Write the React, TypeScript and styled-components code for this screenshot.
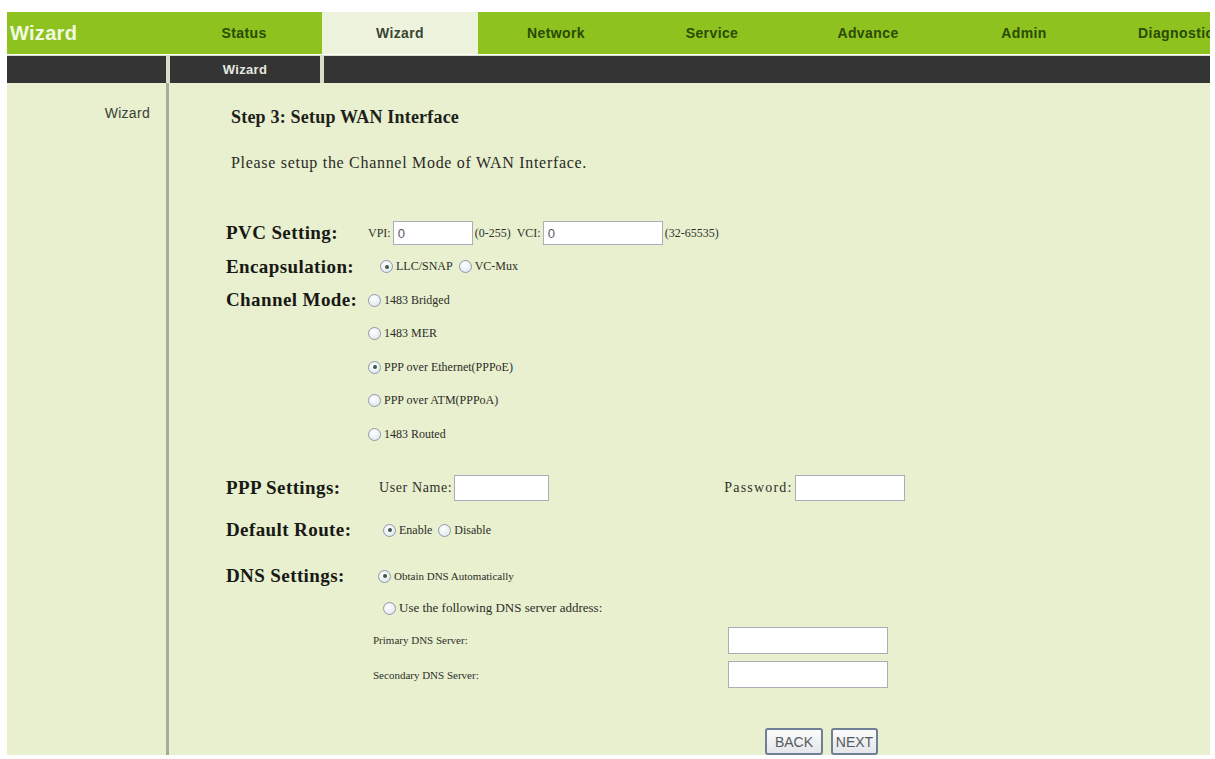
import React from 'react';
import styled, { createGlobalStyle } from 'styled-components';

const GlobalStyle = createGlobalStyle`
  html, body {
    margin: 0;
    padding: 0;
    background: #ffffff;
  }
  body {
    font-family: "Liberation Serif", "Times New Roman", serif;
    overflow: hidden;
  }
`;

const navTabs = ['Status', 'Wizard', 'Network', 'Service', 'Advance', 'Admin', 'Diagnostics'];

const channelModes = [
  { label: '1483 Bridged', checked: false },
  { label: '1483 MER', checked: false },
  { label: 'PPP over Ethernet(PPPoE)', checked: true },
  { label: 'PPP over ATM(PPPoA)', checked: false },
  { label: '1483 Routed', checked: false },
];

const App: React.FC = () => {
  return (
    <>
      <GlobalStyle />
      <Page>
        <TopNav>
          <Logo>Wizard</Logo>
          {navTabs.map((tab) => (
            <NavTab key={tab} $active={tab === 'Wizard'}>
              {tab}
            </NavTab>
          ))}
        </TopNav>
        <SubNav>
          <SubBlank $width={159} />
          <SubTab>Wizard</SubTab>
          <SubBlank $grow />
        </SubNav>
        <Body>
          <Sidebar>
            <SideItem>Wizard</SideItem>
          </Sidebar>
          <Main>
            <Title>Step 3: Setup WAN Interface</Title>
            <Description>Please setup the Channel Mode of WAN Interface.</Description>

            <Row $h={35} $mt={44}>
              <Label>PVC Setting:</Label>
              <Value>
                <Small>VPI:</Small>
                <TextBox $w={80} $h={24} defaultValue="0" />
                <Small>(0-255)</Small>
                <Small $ml={4}>VCI:</Small>
                <TextBox $w={120} $h={24} defaultValue="0" />
                <Small>(32-65535)</Small>
              </Value>
            </Row>

            <Row $h={33}>
              <Label>Encapsulation:</Label>
              <Value $offset={12}>
                <Option>
                  <Radio type="radio" name="encap" defaultChecked />
                  LLC/SNAP
                </Option>
                <Option>
                  <Radio type="radio" name="encap" />
                  VC-Mux
                </Option>
              </Value>
            </Row>

            <Row $align="flex-start">
              <Label $h={33.5}>Channel Mode:</Label>
              <OptionList>
                {channelModes.map((mode) => (
                  <OptionLine key={mode.label} $h={33.5}>
                    <Option>
                      <Radio type="radio" name="channel" defaultChecked={mode.checked} />
                      {mode.label}
                    </Option>
                  </OptionLine>
                ))}
              </OptionList>
            </Row>

            <Row $h={34} $mt={20}>
              <Label>PPP Settings:</Label>
              <Value $offset={11}>
                <Small $size={14} $ls={0.6}>User Name:</Small>
                <TextBox $w={95} $h={26} />
                <Small $size={14} $ls={1.2} $ml={173}>Password:</Small>
                <TextBox $w={110} $h={26} type="password" />
              </Value>
            </Row>

            <Row $h={34} $mt={9}>
              <Label>Default Route:</Label>
              <Value $offset={15}>
                <Option>
                  <Radio type="radio" name="route" defaultChecked />
                  Enable
                </Option>
                <Option>
                  <Radio type="radio" name="route" />
                  Disable
                </Option>
              </Value>
            </Row>

            <Row $align="flex-start" $mt={13}>
              <Label $h={32}>DNS Settings:</Label>
              <OptionList $offset={10}>
                <OptionLine $h={32}>
                  <Option $size={11}>
                    <Radio type="radio" name="dns" defaultChecked />
                    Obtain DNS Automatically
                  </Option>
                </OptionLine>
                <OptionLine $h={32}>
                  <Option $size={13} $offset={5}>
                    <Radio type="radio" name="dns" />
                    Use the following DNS server address:
                  </Option>
                </OptionLine>
                <ServerLine $h={32}>
                  <ServerLabel>Primary DNS Server:</ServerLabel>
                  <TextBox $w={160} $h={27} />
                </ServerLine>
                <ServerLine $h={37}>
                  <ServerLabel>Secondary DNS Server:</ServerLabel>
                  <TextBox $w={160} $h={27} />
                </ServerLine>
              </OptionList>
            </Row>

            <Buttons>
              <Button $w={58}>BACK</Button>
              <Button $w={47}>NEXT</Button>
            </Buttons>
          </Main>
        </Body>
      </Page>
    </>
  );
};

const Page = styled.div`
  width: 1203px;
  margin: 12px 5px 0 7px;
`;

const TopNav = styled.div`
  display: flex;
  height: 42px;
  background: #8dc21f;
  overflow: hidden;
`;

const Logo = styled.div`
  flex: 0 0 159px;
  padding-left: 3px;
  box-sizing: border-box;
  display: flex;
  align-items: center;
  color: #f2fae2;
  font-family: "Liberation Sans", Arial, sans-serif;
  font-weight: bold;
  font-size: 20px;
  letter-spacing: 0.3px;
`;

const NavTab = styled.div<{ $active?: boolean }>`
  flex: 0 0 156px;
  display: flex;
  align-items: center;
  justify-content: center;
  background: ${(p) => (p.$active ? '#eef3de' : 'transparent')};
  color: ${(p) => (p.$active ? '#3a4530' : '#2b4a05')};
  font-family: "Liberation Sans", Arial, sans-serif;
  font-weight: bold;
  font-size: 14px;
  letter-spacing: 0.4px;
  white-space: nowrap;
`;

const SubNav = styled.div`
  display: flex;
  gap: 4px;
  height: 27px;
  margin-top: 1px;
  background: #d9decb;
  border-top: 1px solid #d9decb;
`;

const SubBlank = styled.div<{ $width?: number; $grow?: boolean }>`
  ${(p) => (p.$grow ? 'flex: 1;' : `flex: 0 0 ${p.$width}px;`)}
  background: #333433;
`;

const SubTab = styled.div`
  flex: 0 0 150px;
  background: #333433;
  color: #e6e8e0;
  font-family: "Liberation Sans", Arial, sans-serif;
  font-weight: bold;
  font-size: 13px;
  letter-spacing: 0.3px;
  display: flex;
  align-items: center;
  justify-content: center;
`;

const Body = styled.div`
  display: flex;
  height: 672px;
  background: #e8f0cf;
`;

const Sidebar = styled.div`
  flex: 0 0 162px;
  border-right: 3px solid #a4ad98;
  padding: 22px 16px 0 0;
  box-sizing: border-box;
  text-align: right;
`;

const SideItem = styled.div`
  font-family: "Liberation Sans", Arial, sans-serif;
  font-size: 14px;
  letter-spacing: 0.3px;
  color: #3b3f36;
  line-height: 16px;
`;

const Main = styled.div`
  flex: 1;
  padding: 23px 0 0 57px;
  display: flex;
  flex-direction: column;
`;

const Title = styled.div`
  margin-left: 5px;
  font-size: 18px;
  font-weight: bold;
  letter-spacing: 0.2px;
  line-height: 22px;
  color: #1e1f1a;
`;

const Description = styled.div`
  margin: 26px 0 0 5px;
  font-size: 16px;
  letter-spacing: 0.7px;
  line-height: 18px;
  color: #2a2b25;
`;

const Row = styled.div<{ $h?: number; $mt?: number; $align?: string }>`
  display: flex;
  align-items: ${(p) => p.$align || 'center'};
  ${(p) => (p.$h ? `height: ${p.$h}px;` : '')}
  margin-top: ${(p) => p.$mt || 0}px;
`;

const Label = styled.div<{ $h?: number }>`
  flex: 0 0 142px;
  ${(p) => (p.$h ? `height: ${p.$h}px; display: flex; align-items: center;` : '')}
  font-size: 19px;
  font-weight: bold;
  letter-spacing: 0.4px;
  color: #181914;
  white-space: nowrap;
`;

const Value = styled.div<{ $offset?: number }>`
  display: flex;
  align-items: center;
  gap: 2px;
  padding-left: ${(p) => p.$offset || 0}px;
`;

const Small = styled.span<{ $ml?: number; $size?: number; $ls?: number }>`
  font-size: ${(p) => p.$size || 12}px;
  letter-spacing: ${(p) => p.$ls || 0}px;
  color: #2f3029;
  margin-left: ${(p) => p.$ml || 0}px;
  white-space: nowrap;
`;

const TextBox = styled.input<{ $w: number; $h: number }>`
  display: block;
  width: ${(p) => p.$w}px;
  height: ${(p) => p.$h}px;
  box-sizing: border-box;
  margin: 0;
  padding: 1px 4px 0;
  border: 1px solid #a7aeb6;
  background: #ffffff;
  font-family: "Liberation Sans", Arial, sans-serif;
  font-size: 13px;
  color: #555b66;
  outline: none;
`;

const OptionList = styled.div<{ $offset?: number }>`
  display: flex;
  flex-direction: column;
  padding-left: ${(p) => p.$offset || 0}px;
`;

const OptionLine = styled.div<{ $h: number }>`
  height: ${(p) => p.$h}px;
  display: flex;
  align-items: center;
`;

const Option = styled.label<{ $size?: number; $offset?: number }>`
  display: inline-flex;
  align-items: center;
  gap: 3px;
  margin-right: 4px;
  margin-left: ${(p) => p.$offset || 0}px;
  font-size: ${(p) => p.$size || 12}px;
  color: #2c2d27;
  white-space: nowrap;
`;

const Radio = styled.input`
  appearance: none;
  position: relative;
  width: 13px;
  height: 13px;
  margin: 0;
  box-sizing: border-box;
  border-radius: 50%;
  border: 1px solid #8d9aab;
  background: radial-gradient(circle at 40% 35%, #ffffff 0%, #e6ebf0 70%, #cfd6de 100%);

  &:checked::after {
    content: '';
    position: absolute;
    left: 3.5px;
    top: 3.5px;
    width: 4px;
    height: 4px;
    border-radius: 50%;
    background: #3a5c44;
  }
`;

const ServerLine = styled.div<{ $h: number }>`
  height: ${(p) => p.$h}px;
  display: flex;
  align-items: center;
  margin-left: -5px;
`;

const ServerLabel = styled.span`
  flex: 0 0 355px;
  font-size: 11px;
  color: #2f3029;
`;

const Buttons = styled.div`
  display: flex;
  gap: 8px;
  margin: 35px 0 0 539px;
`;

const Button = styled.button<{ $w: number }>`
  width: ${(p) => p.$w}px;
  height: 27px;
  padding: 0;
  border: 2px solid #6f7f96;
  border-radius: 3px;
  background: linear-gradient(#fbfbfb, #e4e6ea);
  font-family: "Liberation Sans", Arial, sans-serif;
  font-size: 14px;
  color: #555a60;
  cursor: pointer;
`;

export default App;
